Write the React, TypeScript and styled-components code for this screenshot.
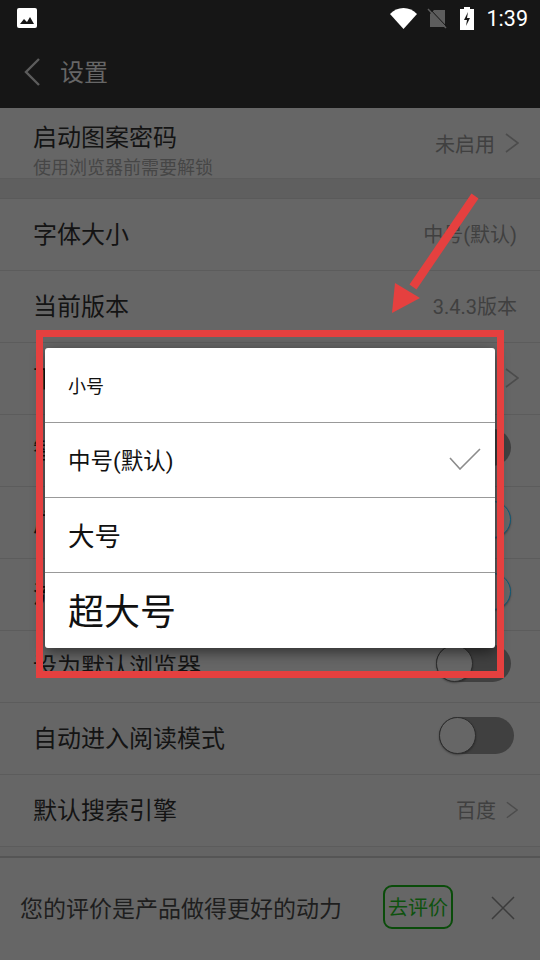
import React from 'react';
import styled, { createGlobalStyle } from 'styled-components';

const GlobalStyle = createGlobalStyle`
  html, body {
    margin: 0;
    padding: 0;
    background: #666666;
  }
  * {
    box-sizing: border-box;
  }
`;

const Page = styled.div`
  position: relative;
  width: 540px;
  height: 960px;
  overflow: hidden;
  display: flex;
  flex-direction: column;
  background: #666666;
  font-family: Roboto, 'Noto Sans CJK SC', sans-serif;
  color: #141414;
`;

const Header = styled.header`
  height: 108px;
  flex-shrink: 0;
  background: #161616;
  display: flex;
  flex-direction: column;
`;

const StatusBar = styled.div`
  height: 36px;
  padding: 0 12px 0 17px;
  display: flex;
  align-items: center;
`;

const StatusIcons = styled.div`
  margin-left: auto;
  display: flex;
  align-items: center;
  gap: 11px;
`;

const StatusGlyph = styled.svg<{ $left?: number }>`
  margin-left: ${p => p.$left ?? 0}px;
`;

const Clock = styled.span`
  font-size: 21.5px;
  color: #ffffff;
  margin-left: 2px;
`;

const NavBar = styled.div`
  height: 72px;
  padding: 0 0 0 24px;
  display: flex;
  align-items: center;
  gap: 20px;
  color: #666666;
  font-size: 24px;
`;

const NavTitle = styled.span`
  margin-bottom: 4px;
`;

const Content = styled.div`
  flex: 1;
  display: flex;
  flex-direction: column;
`;

const Row = styled.div<{ $height?: number }>`
  height: ${p => p.$height ?? 72}px;
  flex-shrink: 0;
  padding: 0 21px 0 33px;
  display: flex;
  align-items: center;
  justify-content: space-between;
  border-bottom: 1px solid #5c5c5c;
`;

const Gap = styled.div`
  height: 20px;
  flex-shrink: 0;
  background: #5f5f5f;
  border-bottom: 1px solid #5a5a5a;
`;

const Label = styled.div`
  font-size: 24px;
  line-height: 30px;
`;

const SubLabel = styled.div`
  font-size: 18px;
  line-height: 22px;
  color: #464646;
  margin-top: 4px;
`;

const TitleBlock = styled.div`
  display: flex;
  flex-direction: column;
  margin-top: 16px;
`;

const Value = styled.div<{ $right?: number }>`
  display: flex;
  align-items: center;
  gap: 10px;
  font-size: 20px;
  color: #404040;
  margin-right: ${p => p.$right ?? 0}px;
`;

const RowValue = styled(Value)`
  margin-bottom: 2px;
`;

const Track = styled.div<{ $on?: boolean; $right?: number }>`
  position: relative;
  width: 75px;
  height: 37px;
  border-radius: 19px;
  background: ${p => (p.$on ? '#666666' : '#404040')};
  margin-right: ${p => p.$right ?? 5}px;
  margin-bottom: 6px;
`;

const Thumb = styled.div<{ $on?: boolean }>`
  position: absolute;
  top: 0;
  left: ${p => (p.$on ? '38px' : '0')};
  width: 37px;
  height: 37px;
  border-radius: 50%;
  background: #666666;
  border: 1px solid ${p => (p.$on ? '#0d5a78' : '#2c2c2c')};
  box-shadow: 0 1px 2px rgba(0, 0, 0, 0.35);
`;

const BottomSpacer = styled.div`
  height: 9px;
  flex-shrink: 0;
  background: #646464;
`;

const RateBar = styled.div`
  flex: 1;
  border-top: 2px solid #555555;
  padding: 0 25px 0 20px;
  display: flex;
  align-items: center;
  font-size: 23px;
  color: #1e1e1e;
`;

const RateText = styled.span`
  margin-bottom: 4px;
  white-space: nowrap;
`;

const RateButton = styled.div`
  margin-left: auto;
  margin-right: 38px;
  margin-bottom: 4px;
  width: 70px;
  height: 44px;
  padding-bottom: 2px;
  border: 2px solid #0a4c0a;
  border-radius: 9px;
  display: flex;
  align-items: center;
  justify-content: center;
  font-size: 20px;
  color: #0e520e;
  white-space: nowrap;
`;

const CloseIcon = styled.svg`
  margin-bottom: 2px;
`;

const Dialog = styled.div`
  position: absolute;
  left: 45px;
  top: 348px;
  width: 450px;
  border-radius: 3px;
  overflow: hidden;
  background: #ffffff;
`;

const DialogShadow = styled.div`
  position: absolute;
  left: 45px;
  top: 348px;
  width: 450px;
  height: 300px;
  border-radius: 3px;
  box-shadow: 0 4px 14px rgba(0, 0, 0, 0.55);
`;

const DialogItem = styled.div<{ $size: number; $lift: number }>`
  height: 75px;
  padding: 0 14px ${p => p.$lift}px 23px;
  display: flex;
  align-items: center;
  justify-content: space-between;
  font-size: ${p => p.$size}px;
  color: #111111;
  border-bottom: 1px solid #999999;

  &:last-child {
    border-bottom: none;
  }
`;

const Highlight = styled.div`
  position: absolute;
  left: 36px;
  top: 330px;
  width: 468px;
  height: 348px;
  border: 7px solid #e5403f;
`;

const ArrowMark = styled.svg`
  position: absolute;
  left: 380px;
  top: 185px;
`;

const Chevron = ({ w = 14, h = 20, color = '#4c4c4c' }: { w?: number; h?: number; color?: string }) => (
  <svg width={w} height={h} viewBox="0 0 14 20" fill="none">
    <path d="M1 1l12 9-12 9" stroke={color} strokeWidth="1.6" />
  </svg>
);

const ImageIcon = () => (
  <svg width="20" height="20" viewBox="0 0 20 20">
    <rect width="20" height="20" rx="2" fill="#fff" />
    <path d="M3 16l4-5 3 3 3-5 4 7z" fill="#161616" />
  </svg>
);

const WifiIcon = () => (
  <StatusGlyph width="27" height="21" viewBox="0 0 27 21">
    <path d="M0 6C3.600 2.200 8.300 0 13.500 0S23.400 2.200 27 6L13.500 21z" fill="#fff" />
  </StatusGlyph>
);

const SimOffIcon = () => (
  <StatusGlyph width="20" height="21" viewBox="0 0 20 21" $left={-1}>
    <path d="M7 2h11v17H3V6z" fill="#5d5d5d" />
    <path d="M1 1l18 19" stroke="#5d5d5d" strokeWidth="1.500" />
    <path d="M2 0l18 19" stroke="#161616" strokeWidth="1" />
  </StatusGlyph>
);

const BatteryIcon = () => (
  <StatusGlyph width="14" height="23" viewBox="0 0 14 23" $left={2}>
    <path d="M4 0h6v2h4v21H0V2h4z" fill="#fff" />
    <path d="M8 5L4 13h3l-1 6 4-8H7z" fill="#161616" />
  </StatusGlyph>
);

const rows = [
  { label: '字体大小', value: '中号(默认)' },
  { label: '当前版本', value: '3.4.3版本' },
  { label: '下载目录', chevron: true },
  { label: '智能无图', toggle: 'off', toggleRight: 8 },
  { label: '广告过滤', toggle: 'on', toggleRight: 8 },
  { label: '流量节省', toggle: 'on', toggleRight: 8 },
  { label: '设为默认浏览器', toggle: 'off', toggleRight: 8 },
  { label: '自动进入阅读模式', toggle: 'off', toggleRight: 5 },
];

const fontSizes = [
  { label: '小号', size: 18, lift: 0 },
  { label: '中号(默认)', size: 22.5, lift: 2, checked: true },
  { label: '大号', size: 26.5, lift: 2 },
  { label: '超大号', size: 36, lift: 4 },
];

export default function App() {
  return (
    <Page>
      <GlobalStyle />
      <Header>
        <StatusBar>
          <ImageIcon />
          <StatusIcons>
            <WifiIcon />
            <SimOffIcon />
            <BatteryIcon />
            <Clock>1:39</Clock>
          </StatusIcons>
        </StatusBar>
        <NavBar>
          <svg width="16" height="28" viewBox="0 0 16 28" fill="none">
            <path d="M15 1L2 14l13 13" stroke="#5c5c5c" strokeWidth="2.400" />
          </svg>
          <NavTitle>设置</NavTitle>
        </NavBar>
      </Header>

      <Content>
        <Row $height={71}>
          <TitleBlock>
            <Label>启动图案密码</Label>
            <SubLabel>使用浏览器前需要解锁</SubLabel>
          </TitleBlock>
          <Value>
            未启用
            <Chevron />
          </Value>
        </Row>
        <Gap />
        {rows.map(row => (
          <Row key={row.label}>
            <Label>{row.label}</Label>
            {row.value && <RowValue $right={2}>{row.value}</RowValue>}
            {row.chevron && (
              <RowValue>
                <Chevron />
              </RowValue>
            )}
            {row.toggle && (
              <Track $on={row.toggle === 'on'} $right={row.toggleRight}>
                <Thumb $on={row.toggle === 'on'} />
              </Track>
            )}
          </Row>
        ))}
        <Row>
          <Label>默认搜索引擎</Label>
          <RowValue $right={1}>
            百度
            <Chevron w={12} h={18} />
          </RowValue>
        </Row>
        <BottomSpacer />
        <RateBar>
          <RateText>您的评价是产品做得更好的动力</RateText>
          <RateButton>去评价</RateButton>
          <CloseIcon width="24" height="24" viewBox="0 0 24 24" fill="none">
            <path d="M1 1l22 22M23 1L1 23" stroke="#3c3c3c" strokeWidth="1.500" />
          </CloseIcon>
        </RateBar>
      </Content>

      <DialogShadow />
      <Dialog>
        {fontSizes.map(item => (
          <DialogItem key={item.label} $size={item.size} $lift={item.lift}>
            {item.label}
            {item.checked && (
              <svg width="32" height="22" viewBox="0 0 32 22" fill="none">
                <path d="M1 10l10 11L31 1" stroke="#8c8c8c" strokeWidth="1.600" />
              </svg>
            )}
          </DialogItem>
        ))}
      </Dialog>
      <Highlight />
      <ArrowMark width="110" height="140" viewBox="0 0 110 140" fill="none">
        <path d="M95 11L33 102" stroke="#e5403f" strokeWidth="8.500" />
        <path d="M12 128l3-30 25 15z" fill="#e5403f" />
      </ArrowMark>
    </Page>
  );
}
